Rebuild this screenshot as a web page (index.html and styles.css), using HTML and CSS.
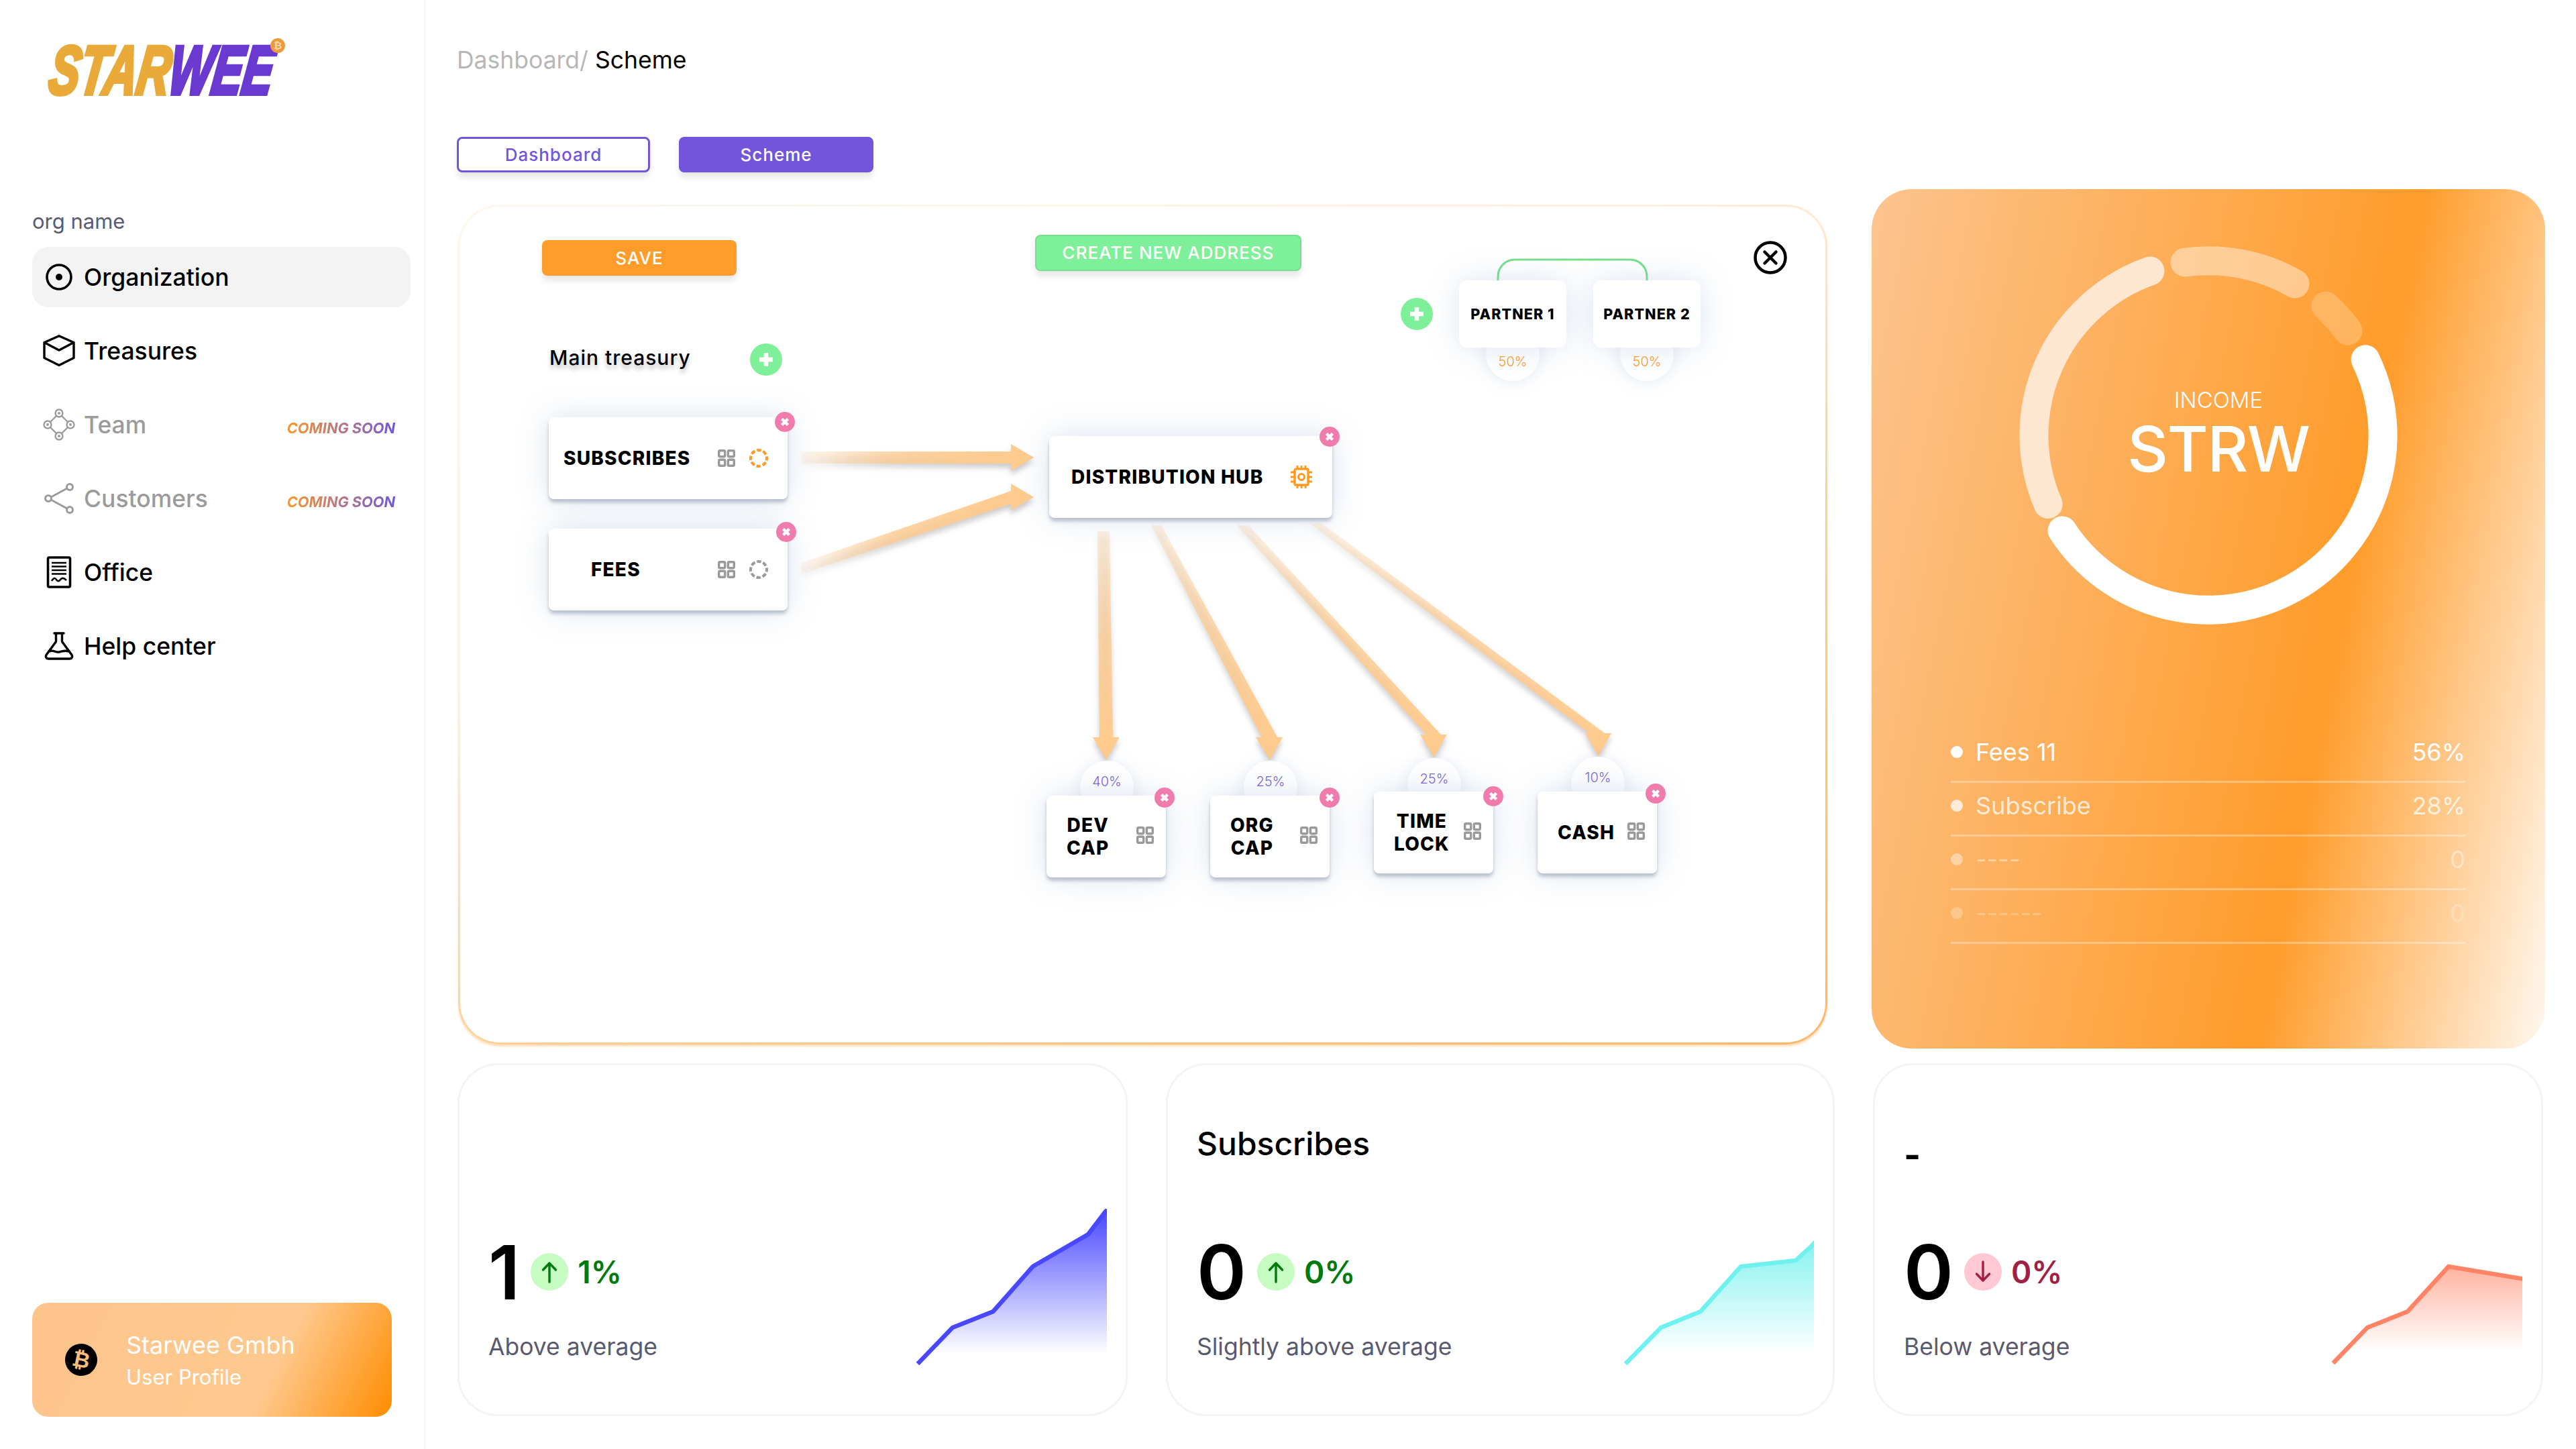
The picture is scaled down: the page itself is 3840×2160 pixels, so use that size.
FILE: index.html
```html
<!DOCTYPE html>
<html lang="en">
<head>
<meta charset="utf-8">
<title>Starwee Scheme</title>
<link rel="stylesheet" href="styles.css">
</head>
<body>
<svg class="defs" aria-hidden="true">
  <symbol id="i-grid" viewBox="0 0 26 26">
    <g fill="none" stroke="currentColor" stroke-width="3.4">
      <rect x="1.7" y="1.7" width="9" height="9" rx="1.6"/>
      <rect x="15.3" y="1.7" width="9" height="9" rx="1.6"/>
      <rect x="1.7" y="15.3" width="9" height="9" rx="1.6"/>
      <rect x="15.3" y="15.3" width="9" height="9" rx="1.6"/>
    </g>
  </symbol>
  <symbol id="i-ring" viewBox="0 0 28 28">
    <circle cx="14" cy="14" r="12" fill="none" stroke="currentColor" stroke-width="4" stroke-dasharray="6.4 3" stroke-dashoffset="3"/>
  </symbol>
  <symbol id="i-x" viewBox="0 0 30 30">
    <circle cx="15" cy="15" r="15" fill="#f07cae"/>
    <path d="M10.5 10.5l9 9M19.5 10.5l-9 9" stroke="#fff" stroke-width="4.4" fill="none"/>
  </symbol>
  <symbol id="i-plus" viewBox="0 0 48 48">
    <circle cx="24" cy="24" r="24" fill="#7ff09a"/>
    <path d="M24 14v20M14 24h20" stroke="#fff" stroke-width="6.5" fill="none"/>
  </symbol>
  <symbol id="i-up" viewBox="0 0 56 56">
    <path d="M28 43V15M18.500 25L28 15l9.500 10" fill="none" stroke="currentColor" stroke-width="3.400" stroke-linecap="round" stroke-linejoin="round"/>
  </symbol>
  <symbol id="i-down" viewBox="0 0 56 56">
    <path d="M28 13v28M18.500 31L28 41l9.500-10" fill="none" stroke="currentColor" stroke-width="3.400" stroke-linecap="round" stroke-linejoin="round"/>
  </symbol>
</svg>

<div class="app">
  <aside class="side">
    <div class="logo">
      <span class="logo-word"><span class="logo-a">STAR</span><span class="logo-b">WEE</span></span>
      <span class="logo-badge">₿</span>
    </div>
    <div class="org">org name</div>
    <nav class="nav">
      <a class="nav-item active">
        <svg class="nav-icon" viewBox="0 0 48 48"><circle cx="24" cy="24" r="18" fill="none" stroke="currentColor" stroke-width="3.600"/><circle cx="24" cy="24" r="5" fill="currentColor"/></svg>
        <span>Organization</span>
      </a>
      <a class="nav-item">
        <svg class="nav-icon" viewBox="0 0 48 48"><path d="M24 1.800L46 11.500V34.500L24 45.500 2 34.500V11.500ZM2 11.500L24 23 46 11.500" fill="none" stroke="currentColor" stroke-width="3.400" stroke-linejoin="round"/></svg>
        <span>Treasures</span>
      </a>
      <a class="nav-item off">
        <svg class="nav-icon" viewBox="0 0 48 48"><g fill="none" stroke="currentColor" stroke-width="2.400"><circle cx="24" cy="7" r="5.500"/><circle cx="7" cy="24" r="5.500"/><circle cx="41" cy="24" r="5.500"/><circle cx="24" cy="41" r="5.500"/><path d="M20 11L11 20M28 11l9 9M11 28l9 9M37 28l-9 9"/></g><g fill="currentColor"><circle cx="24" cy="7" r="2"/><circle cx="7" cy="24" r="2"/><circle cx="41" cy="24" r="2"/><circle cx="24" cy="41" r="2"/></g></svg>
        <span>Team</span>
        <em class="soon">COMING SOON</em>
      </a>
      <a class="nav-item off">
        <svg class="nav-icon" viewBox="0 0 48 48"><g fill="none" stroke="currentColor" stroke-width="3"><circle cx="40" cy="7" r="4.500"/><circle cx="8" cy="24" r="4.500"/><circle cx="40" cy="41" r="4.500"/><path d="M36 9L12 22M12 26l24 13"/></g></svg>
        <span>Customers</span>
        <em class="soon">COMING SOON</em>
      </a>
      <a class="nav-item">
        <svg class="nav-icon" viewBox="0 0 48 48"><rect x="7.500" y="2" width="33" height="44" rx="2" fill="none" stroke="currentColor" stroke-width="3.600"/><path d="M13 10h22M13 15.500h22M13 21h22M13 26.500h22" stroke="currentColor" stroke-width="2.400" fill="none"/><path d="M13 37c3-5 5-5 7-2s4 3 6 0 5-3 9 1" stroke="currentColor" stroke-width="2.600" fill="none"/></svg>
        <span>Office</span>
      </a>
      <a class="nav-item">
        <svg class="nav-icon" viewBox="0 0 48 48"><path d="M17 5h14M19.500 5v12.500L5.500 36.500C3 40 5 43 8.500 43h31c3.500 0 5.500-3 3-6.500L28.500 17.500V5M10 32c5-3 9 2 14 1s8-3 14-1" fill="none" stroke="currentColor" stroke-width="3.400" stroke-linejoin="round" stroke-linecap="round"/></svg>
        <span>Help center</span>
      </a>
    </nav>
    <div class="profile">
      <span class="btc">₿</span>
      <div class="profile-text">
        <div class="profile-name">Starwee Gmbh</div>
        <div class="profile-sub">User Profile</div>
      </div>
    </div>
  </aside>

  <main class="main">
    <div class="crumb"><span class="crumb-a">Dashboard/</span> Scheme</div>
    <div class="tabs">
      <button class="tab">Dashboard</button>
      <button class="tab tab-on">Scheme</button>
    </div>

    <div class="top">
      <section class="panel">
        <svg class="arrows" width="2035" height="1246" viewBox="0 0 2035 1246">
          <defs>
            <linearGradient id="g1" gradientUnits="userSpaceOnUse" x1="1195" y1="0" x2="1500" y2="0"><stop offset="0" stop-color="#ffcb8e" stop-opacity=".12"/><stop offset=".45" stop-color="#ffcb8e" stop-opacity=".78"/><stop offset="1" stop-color="#ffcb8e"/></linearGradient>
            <linearGradient id="g2" gradientUnits="userSpaceOnUse" x1="0" y1="780" x2="0" y2="1100"><stop offset="0" stop-color="#ffcb8e" stop-opacity=".22"/><stop offset=".5" stop-color="#ffcb8e" stop-opacity=".72"/><stop offset="1" stop-color="#ffcb8e"/></linearGradient>
          </defs>
          <g transform="translate(-686 -308)">
            <path class="link" d="M2233 418V412a25 25 0 0 1 25-25H2430a25 25 0 0 1 25 25V418"/>
            <polygon class="arrow" fill="url(#g1)" points="1194.500,673 1507,673 1507,662 1541,682 1507,702 1507,691 1194.500,691"/>
            <polygon class="arrow" fill="url(#g1)" points="1194.500,839 1507,732 1507,721 1541,741 1507,761 1507,751 1194.500,856"/>
            <polygon class="arrow" fill="url(#g2)" points="1636,792 1654,792 1659,1099 1668.500,1099 1649,1133 1629,1099 1639,1099"/>
            <polygon class="arrow" fill="url(#g2)" points="1716,783 1731,783 1904,1099 1912,1099 1893,1133 1872,1099 1881,1099"/>
            <polygon class="arrow" fill="url(#g2)" points="1843.500,783 1861,783 2148,1095 2157,1095 2137.600,1129 2117,1095 2126,1095"/>
            <polygon class="arrow" fill="url(#g2)" points="1952,780 1970,780 2392,1093 2402,1093 2383,1127 2363,1093 2369,1093"/>
          </g>
        </svg>

        <button class="cta cta-save">SAVE</button>
        <button class="cta cta-new">CREATE NEW ADDRESS</button>
        <div class="treasury">Main treasury</div>
        <svg class="plus plus-a"><use href="#i-plus"/></svg>
        <svg class="plus plus-b"><use href="#i-plus"/></svg>
        <svg class="closer" viewBox="0 0 50 50"><circle cx="25" cy="25" r="22.500" fill="none" stroke="#000" stroke-width="4.500"/><path d="M16.500 16.500l17 17M33.500 16.500l-17 17" stroke="#000" stroke-width="4.500" stroke-linecap="round"/></svg>

        <div class="bubble up b-dev">40%</div>
        <div class="bubble up b-org">25%</div>
        <div class="bubble up b-time">25%</div>
        <div class="bubble up b-cash">10%</div>
        <div class="bubble dn b-p1">50%</div>
        <div class="bubble dn b-p2">50%</div>

        <div class="node n-subs">
          <span class="label">SUBSCRIBES</span>
          <svg class="grid"><use href="#i-grid"/></svg>
          <svg class="ring ring-on"><use href="#i-ring"/></svg>
          <svg class="x"><use href="#i-x"/></svg>
        </div>
        <div class="node n-fees">
          <span class="label">FEES</span>
          <svg class="grid"><use href="#i-grid"/></svg>
          <svg class="ring"><use href="#i-ring"/></svg>
          <svg class="x"><use href="#i-x"/></svg>
        </div>
        <div class="node n-hub">
          <span class="label">DISTRIBUTION HUB</span>
          <svg class="gear" viewBox="0 0 34 34"><rect x="7" y="5" width="20" height="24" rx="2" fill="none" stroke="#ff9a1f" stroke-width="3.400"/><circle cx="17" cy="17" r="4.500" fill="none" stroke="#ff9a1f" stroke-width="3"/><path d="M11 0v5M17 0v5M23 0v5M11 29v5M17 29v5M23 29v5M1 10h6M1 17h6M1 24h6M27 10h6M27 17h6M27 24h6" stroke="#ff9a1f" stroke-width="2.800" fill="none"/></svg>
          <svg class="x"><use href="#i-x"/></svg>
        </div>
        <div class="node leaf n-dev">
          <span class="label">DEV<br>CAP</span>
          <svg class="grid"><use href="#i-grid"/></svg>
          <svg class="x"><use href="#i-x"/></svg>
        </div>
        <div class="node leaf n-org">
          <span class="label">ORG<br>CAP</span>
          <svg class="grid"><use href="#i-grid"/></svg>
          <svg class="x"><use href="#i-x"/></svg>
        </div>
        <div class="node leaf n-time">
          <span class="label">TIME<br>LOCK</span>
          <svg class="grid"><use href="#i-grid"/></svg>
          <svg class="x"><use href="#i-x"/></svg>
        </div>
        <div class="node leaf n-cash">
          <span class="label">CASH</span>
          <svg class="grid"><use href="#i-grid"/></svg>
          <svg class="x"><use href="#i-x"/></svg>
        </div>
        <div class="partner n-p1">PARTNER 1</div>
        <div class="partner n-p2">PARTNER 2</div>
      </section>

      <section class="income">
        <div class="donut">
          <svg width="600" height="600" viewBox="0 0 600 600">
            <g fill="none" stroke-width="43" stroke-linecap="round">
              <path stroke="#fff" d="M534.100 186.800A260 260 0 0 1 82.200 442"/>
              <path stroke="#fee7d0" d="M61.100 402.500A260 260 0 0 1 213 55"/>
              <path stroke="#fff" stroke-opacity=".42" d="M265 42A260 260 0 0 1 429 74"/>
              <path stroke="#fff" stroke-opacity=".22" d="M475 107A260 260 0 0 1 508 144"/>
            </g>
          </svg>
          <div class="donut-text">
            <div class="donut-a">INCOME</div>
            <div class="donut-b">STRW</div>
          </div>
        </div>
        <ul class="legend">
          <li class="lg lg1"><i></i><span>Fees 11</span><b>56%</b></li>
          <li class="lg lg2"><i></i><span>Subscribe</span><b>28%</b></li>
          <li class="lg lg3"><i></i><span>----</span><b>0</b></li>
          <li class="lg lg4"><i></i><span>------</span><b>0</b></li>
        </ul>
      </section>
    </div>

    <div class="cards">
      <article class="card">
        <div class="card-main">
          <div class="card-title">&nbsp;</div>
          <div class="card-row"><span class="num">1</span><span class="pill pill-up"><svg><use href="#i-up"/></svg></span><span class="pct pct-up">1%</span></div>
          <div class="card-cap">Above average</div>
        </div>
        <svg class="chart" viewBox="0 0 285 240">
          <defs><linearGradient id="c1" x1="0" y1="0" x2="0" y2="1"><stop offset="0" stop-color="#4a4aff"/><stop offset="1" stop-color="#4a4aff" stop-opacity="0"/></linearGradient></defs>
          <polygon fill="url(#c1)" points="55,177 115.500,153 174.500,86 257,38 283,4 285,4 285,216 25,216"/>
          <polyline class="line" stroke="#4848ff" points="3,231 55,177 115.500,153 174.500,86 257,38 283,4 290,-3"/>
        </svg>
      </article>
      <article class="card">
        <div class="card-main">
          <div class="card-title">Subscribes</div>
          <div class="card-row"><span class="num">0</span><span class="pill pill-up"><svg><use href="#i-up"/></svg></span><span class="pct pct-up">0%</span></div>
          <div class="card-cap">Slightly above average</div>
        </div>
        <svg class="chart" viewBox="0 0 285 240">
          <defs><linearGradient id="c2" x1="0" y1="0" x2="0" y2="1"><stop offset="0" stop-color="#6ff0ee" stop-opacity=".8"/><stop offset="1" stop-color="#6ff0ee" stop-opacity="0"/></linearGradient></defs>
          <polygon fill="url(#c2)" points="57,177 116,153 176,86 258,77 281,56 285,56 285,216 25,216"/>
          <polyline class="line" stroke="#6ff2ef" points="4,231 57,177 116,153 176,86 258,77 281,56 290,46"/>
        </svg>
      </article>
      <article class="card">
        <div class="card-main">
          <div class="card-title title-dash">-</div>
          <div class="card-row"><span class="num">0</span><span class="pill pill-dn"><svg><use href="#i-down"/></svg></span><span class="pct pct-dn">0%</span></div>
          <div class="card-cap">Below average</div>
        </div>
        <svg class="chart" viewBox="0 0 285 240">
          <defs><linearGradient id="c3" x1="0" y1="0" x2="0" y2="1"><stop offset="0" stop-color="#ff8466" stop-opacity=".62"/><stop offset="1" stop-color="#ff8466" stop-opacity="0"/></linearGradient></defs>
          <polygon fill="url(#c3)" points="54,177 114,153 175,86 285,104 285,212 25,212"/>
          <polyline class="line" stroke="#ff8466" points="3,230 54,177 114,153 175,86 290,105"/>
        </svg>
      </article>
    </div>
  </main>
</div>
</body>
</html>
```
FILE: styles.css
```css
* { box-sizing: border-box; }
html, body { margin: 0; padding: 0; background: #fff; }
body { width: 3840px; height: 2160px; overflow: hidden; font-family: Inter, "Liberation Sans", sans-serif; color: #000; }
.defs { display: none; }
.app { display: flex; height: 2160px; }

/* sidebar */
.side { width: 635px; flex: none; border-right: 3px solid #f6f6f6; display: flex; flex-direction: column; padding: 0 20px 48px 48px; }
.logo { position: relative; height: 310px; padding: 54px 0 0 27px; }
.logo-word { display: inline-block; font-family: "Liberation Sans", sans-serif; font-weight: 700; font-style: italic; font-size: 102px; line-height: 1; white-space: nowrap; -webkit-text-stroke: 6px currentColor; transform-origin: 0 50%; transform: scaleX(.665) skewX(-12deg); }
.logo-a { color: #e9aa3a; }
.logo-b { color: #6a3ad0; }
.logo-badge { position: absolute; left: 355px; top: 57px; width: 22px; height: 22px; border-radius: 50%; background: #ee9a3c; color: #fbd9ae; font: 700 15px/22px "DejaVu Sans", sans-serif; text-align: center; }
.org { font-size: 31px; line-height: 40px; color: #5b5b72; margin-bottom: 18px; }
.nav { display: flex; flex-direction: column; gap: 20px; width: 564px; }
.nav-item { height: 90px; display: flex; align-items: center; gap: 13px; padding: 0 23px 0 16px; border-radius: 24px; font-size: 35.500px; font-weight: 500; color: #000; }
.nav-item.active { background: #f3f3f3; }
.nav-item.off { color: #9b9b9b; }
.nav-icon { width: 48px; height: 48px; flex: none; }
.soon { margin-left: auto; margin-top: 10px; font-size: 21.700px; font-style: italic; font-weight: 700; background: linear-gradient(90deg, #ff9526, #6f56e0); -webkit-background-clip: text; background-clip: text; color: transparent; }
.profile { margin-top: auto; width: 536px; height: 170px; border-radius: 24px; display: flex; align-items: center; padding-left: 49px; color: #fff; background: linear-gradient(117deg, #fdc48b 0%, #fec98e 66%, #ff8c00 100%); }
.btc { width: 48px; height: 48px; border-radius: 50%; background: #000; color: #fbbd7d; flex: none; font: 700 32px/48px "DejaVu Sans", sans-serif; text-align: center; transform: rotate(12deg); }
.profile-text { margin-left: 43px; padding-top: 3px; }
.profile-name { font-size: 36px; line-height: 46px; }
.profile-sub { font-size: 31px; line-height: 46px; margin-top: 2px; }

/* main */
.main { flex: 1; min-width: 0; padding: 68px 46px 0; }
.crumb { font-size: 35.500px; line-height: 44px; }
.crumb-a { color: #b7b7b7; }
.tabs { display: flex; gap: 43px; margin-top: 92px; }
.tab { width: 288px; height: 53px; border-radius: 8px; border: 3px solid #7355db; background: #fff; color: #7355db; font: 500 26px/1 Inter, sans-serif; letter-spacing: 1px; box-shadow: 0 8px 8px rgba(0, 0, 0, .09); padding: 0; }
.tab-on { width: 290px; background: #7355db; color: #fff; }
.top { display: flex; gap: 66px; margin-top: 25px; align-items: flex-start; }

/* scheme panel — free canvas for the diagram */
.panel { position: relative; width: 2041px; height: 1252px; flex: none; margin: 23px 0 0 2px; border: 3px solid transparent; border-radius: 62px; background: linear-gradient(#fff, #fff) padding-box, linear-gradient(158deg, #fff7ee 0%, #fff0df 35%, #ffd6a5 55%, #ffc88c 70%, #ffb765 100%) border-box; box-shadow: 0 3px 3px rgba(255, 175, 90, .4); }
.arrows { position: absolute; left: 0; top: 0; }
.arrow { filter: drop-shadow(0 6px 4px rgba(60, 60, 70, .28)); }
.link { fill: none; stroke: #76e08c; stroke-width: 3; }
.cta { position: absolute; height: 53px; border-radius: 8px; color: #fff; font: 500 26px/1 Inter, sans-serif; letter-spacing: 1px; box-shadow: 0 8px 8px rgba(0, 0, 0, .09); padding: 0; }
.cta-save { left: 122px; top: 50px; width: 290px; background: #ff9c2a; border: 0; }
.cta-new { left: 857px; top: 42px; width: 397px; height: 54px; background: #7ff09a; border: 2px solid #74e08c; }
.treasury { position: absolute; left: 133px; top: 207px; font-size: 30px; line-height: 36px; font-weight: 500; letter-spacing: 1px; text-shadow: 0 6px 6px rgba(0, 0, 0, .25); }
.plus { position: absolute; width: 48px; height: 48px; }
.plus-a { left: 432px; top: 204px; }
.plus-b { left: 1402px; top: 136px; }
.closer { position: absolute; left: 1928px; top: 51px; width: 50px; height: 50px; }

.bubble { position: absolute; width: 80px; height: 80px; border-radius: 50%; background: #fff; display: flex; align-items: center; justify-content: center; font-size: 20px; font-weight: 300; box-shadow: 0 2px 24px rgba(130, 160, 200, .22); }
.bubble.up { color: #7a62e0; padding-bottom: 18px; }
.bubble.dn { color: #ff9a26; padding-top: 22px; }
.b-dev { left: 924px; top: 826px; }
.b-org { left: 1168px; top: 826px; }
.b-time { left: 1412px; top: 822px; }
.b-cash { left: 1656px; top: 820px; }
.b-p1 { left: 1529px; top: 180px; }
.b-p2 { left: 1729px; top: 180px; }

.node { position: absolute; height: 122px; border-radius: 8px; background: #fff; display: flex; align-items: center; box-shadow: 0 5px 5px rgba(110, 125, 150, .42), 0 0 46px rgba(130, 160, 200, .3); }
.label { font-size: 28px; line-height: 34px; font-weight: 800; letter-spacing: 1.200px; white-space: nowrap; text-align: center; }
.grid { width: 26px; height: 26px; color: #9a9a9a; flex: none; }
.ring { width: 28px; height: 28px; color: #9a9a9a; flex: none; margin-left: 21px; }
.ring-on { color: #ff9a26; }
.gear { width: 34px; height: 34px; flex: none; margin-left: auto; margin-right: 29px; }
.x { position: absolute; width: 30px; height: 30px; right: -13px; top: -12px; }
.n-subs { left: 132px; top: 314px; width: 356px; }
.n-fees { left: 132px; top: 480px; width: 356px; }
.n-subs .label { margin-left: 22px; }
.n-fees .label { margin-left: 63px; }
.n-subs .grid, .n-fees .grid { margin-left: auto; }
.n-subs .ring, .n-fees .ring { margin-right: 29px; }
.n-subs .x { right: -11px; top: -8px; }
.n-fees .x { top: -10px; }
.n-hub { left: 878px; top: 342px; width: 422px; }
.n-hub .label { margin-left: 33px; }
.n-hub .x { right: -11px; top: -14px; }
.leaf { width: 178px; }
.leaf .label { margin-left: 30px; }
.leaf .grid { margin-left: auto; margin-right: 18px; margin-bottom: 4px; }
.n-dev { left: 874px; top: 878px; }
.n-org { left: 1118px; top: 878px; }
.n-time { left: 1362px; top: 872px; }
.n-cash { left: 1606px; top: 872px; }
.n-org .x { right: -15px; }
.n-time .x { right: -15px; top: -8px; }
.partner { position: absolute; top: 110px; width: 160px; height: 100px; border-radius: 12px; background: #fff; display: flex; align-items: center; justify-content: center; font-size: 21.500px; font-weight: 800; letter-spacing: 1.100px; box-shadow: 0 0 46px rgba(130, 160, 200, .28); }
.n-p1 { left: 1489px; }
.n-p2 { left: 1689px; }

/* income */
.income { width: 1004px; height: 1281px; flex: none; border-radius: 60px; color: #fff; background: linear-gradient(101deg, #fcc48e 0%, #ff9c2a 65.600%, #fff8f0 100%); padding: 67px 119px 0 118px; }
.donut { position: relative; width: 600px; height: 600px; margin-left: 84px; }
.donut svg { display: block; }
.donut-text { position: absolute; inset: 0; display: flex; flex-direction: column; align-items: center; justify-content: center; padding: 0 0 3px 30px; }
.donut-a { font-size: 33px; line-height: 40px; font-weight: 300; }
.donut-b { font-size: 94px; line-height: 100px; font-weight: 500; letter-spacing: -1.500px; margin-top: 3px; }
.legend { list-style: none; margin: 138px 0 0; padding: 0; }
.lg { height: 80px; padding-bottom: 10px; display: flex; align-items: center; font-size: 36px; border-bottom: 3px solid rgba(255, 255, 255, .32); }
.lg i { width: 18px; height: 18px; border-radius: 50%; background: #fff; margin-right: 19px; flex: none; }
.lg b { margin-left: auto; font-weight: 400; }
.lg1 > * { opacity: 1; }
.lg2 > * { opacity: .75; }
.lg3 > * { opacity: .42; }
.lg4 > * { opacity: .25; }

/* bottom cards */
.cards { display: grid; grid-template-columns: 999px 997px 999px; gap: 57px; margin: 22px 0 0 1px; }
.card { height: 526px; border: 3px solid #f4f4f4; border-radius: 60px; display: flex; justify-content: space-between; padding-left: 43px; }
.card-main { padding-top: 87px; }
.card-title { font-size: 48px; line-height: 60px; height: 60px; font-weight: 500; }
.title-dash { font-size: 54px; font-weight: 700; padding-top: 33px; line-height: 27px; }
.card-row { display: flex; align-items: center; height: 112px; margin-top: 105px; }
.num { font-size: 112px; line-height: 112px; font-weight: 600; }
.pill { width: 56px; height: 56px; border-radius: 50%; display: block; margin-left: 16px; flex: none; }
.pill svg { display: block; width: 56px; height: 56px; }
.pill-up { background: #c6fbc2; color: #007a0c; }
.pill-dn { background: #ffc8d4; color: #a01f42; }
.pct { font-size: 46px; font-weight: 600; margin-left: 14px; }
.pct-up { color: #007a0c; }
.pct-dn { color: #a01f42; }
.card-cap { margin-top: 34px; font-size: 35.500px; line-height: 44px; color: #5a5a6e; }
.chart { width: 285px; height: 240px; align-self: flex-end; margin: 0 28px 66px 0; flex: none; }
.line { fill: none; stroke-width: 6.500; stroke-linejoin: miter; }
```
